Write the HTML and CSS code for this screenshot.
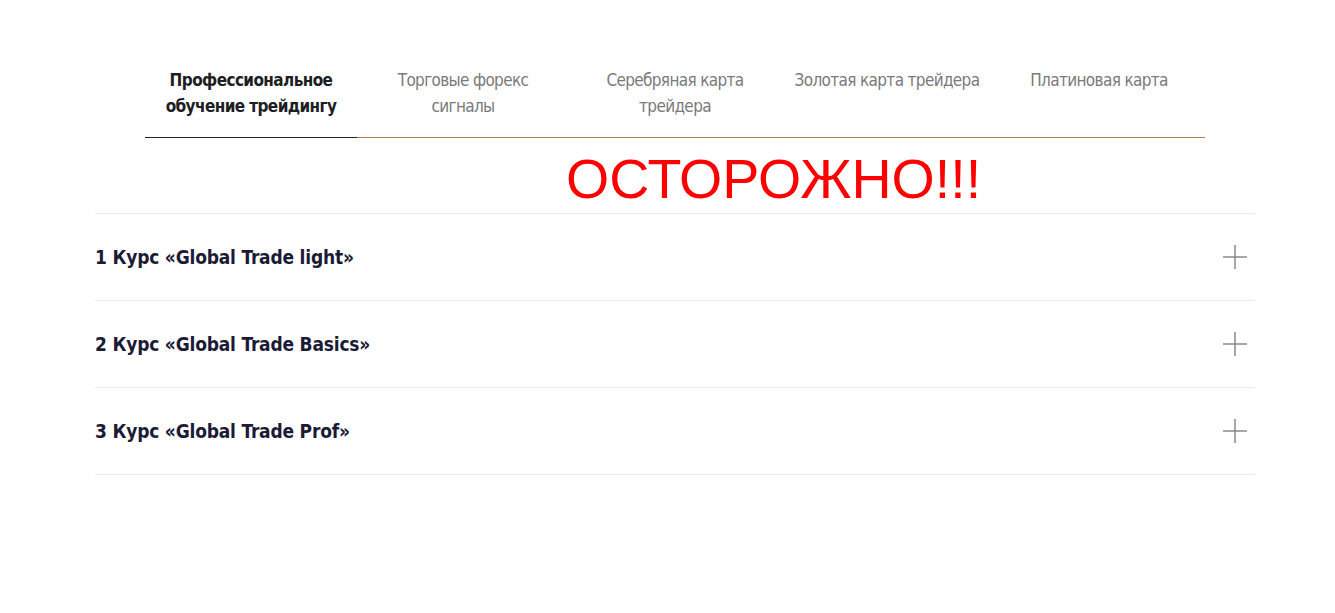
FILE: index.html
```html
<!DOCTYPE html>
<html lang="ru">
<head>
<meta charset="utf-8">
<title>Курсы</title>
<link rel="stylesheet" href="styles.css">
</head>
<body>
<div class="page">
  <nav class="tabs">
    <div class="tab active">Профессиональное<br>обучение трейдингу</div>
    <div class="tab">Торговые форекс<br>сигналы</div>
    <div class="tab">Серебряная карта<br>трейдера</div>
    <div class="tab">Золотая карта трейдера</div>
    <div class="tab">Платиновая карта</div>
  </nav>
  <p class="warning">ОСТОРОЖНО!!!</p>
  <div class="accordion">
    <div class="item">
      <span class="item-title">1 Курс «Global Trade light»</span>
      <svg class="plus" width="24" height="24" viewBox="0 0 24 24"><path d="M12 0V24M0 12H24" stroke="#8a8a8a" stroke-width="1.5" fill="none"/></svg>
    </div>
    <div class="item">
      <span class="item-title">2 Курс «Global Trade Basics»</span>
      <svg class="plus" width="24" height="24" viewBox="0 0 24 24"><path d="M12 0V24M0 12H24" stroke="#8a8a8a" stroke-width="1.5" fill="none"/></svg>
    </div>
    <div class="item">
      <span class="item-title">3 Курс «Global Trade Prof»</span>
      <svg class="plus" width="24" height="24" viewBox="0 0 24 24"><path d="M12 0V24M0 12H24" stroke="#8a8a8a" stroke-width="1.5" fill="none"/></svg>
    </div>
  </div>
</div>
</body>
</html>
```

FILE: styles.css
```css
html, body {
  margin: 0;
  padding: 0;
  background: #ffffff;
}

.page {
  width: 1160px;
  margin-left: 95px;
  padding-top: 67px;
  font-family: "DejaVu Sans Condensed", "DejaVu Sans", sans-serif;
  font-stretch: condensed;
}

.tabs {
  margin: 0 50px;
  display: grid;
  grid-template-columns: repeat(5, minmax(0, 1fr));
  border-bottom: 1px solid #b5764a;
}

.tab {
  text-align: center;
  white-space: nowrap;
  font-size: 17px;
  line-height: 26px;
  letter-spacing: -0.65px;
  color: #7a7a7a;
  padding: 0 0 18px;
  margin-bottom: -1px;
  border-bottom: 1px solid transparent;
}

.tab.active {
  color: #1e1e24;
  font-weight: bold;
  letter-spacing: -0.6px;
  border-bottom-color: #222222;
}

.warning {
  margin: 14px 0 6px 471px;
  font-family: "Liberation Sans", Arial, sans-serif;
  font-stretch: normal;
  font-size: 55.6px;
  line-height: 55px;
  color: #ff0000;
}

.accordion {
  border-bottom: 1px solid #ebebeb;
}

.item {
  height: 86px;
  border-top: 1px solid #ebebeb;
  display: flex;
  align-items: center;
  justify-content: space-between;
  padding-right: 8px;
}

.item-title {
  font-size: 19px;
  font-weight: bold;
  letter-spacing: -0.2px;
  color: #1c1b36;
}

.plus {
  display: block;
}
```
